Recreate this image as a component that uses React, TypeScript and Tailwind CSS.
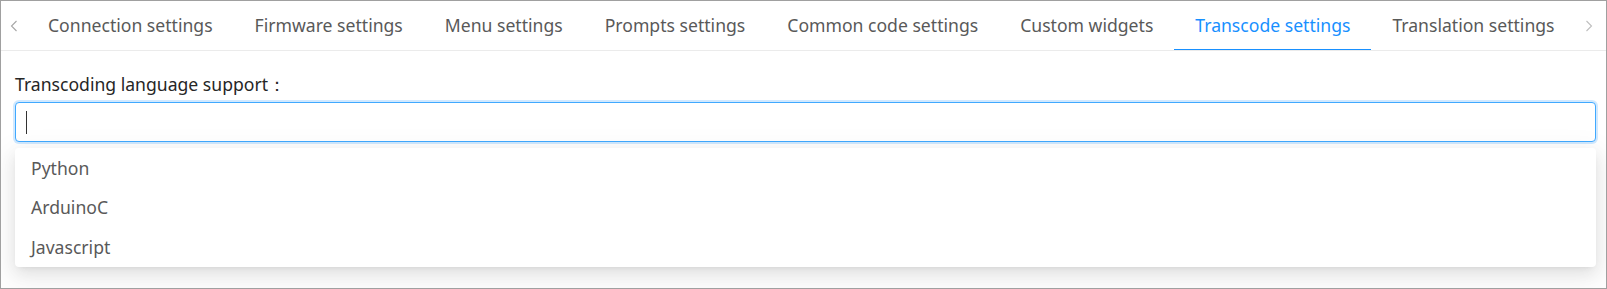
import React from "react";

const tabs = [
  "Connection settings",
  "Firmware settings",
  "Menu settings",
  "Prompts settings",
  "Common code settings",
  "Custom widgets",
  "Transcode settings",
  "Translation settings",
];

const options = ["Python", "ArduinoC", "Javascript"];

export default function App() {
  return (
    <div
      className="w-[1607px] h-[289px] border border-[#a0a0a0] bg-white flex flex-col overflow-hidden"
      style={{ fontFamily: '"Noto Sans", "Open Sans", sans-serif' }}
    >
      <div className="h-[50px] shrink-0 border-b border-[#ebebeb] flex items-stretch">
        <div className="w-[26px] shrink-0 flex items-center justify-center text-[#a6a6a6]">
          <svg width="8" height="12" viewBox="0 0 8 12" fill="none">
            <path d="M6.5 1 L1.5 6 L6.5 11" stroke="currentColor" strokeWidth="1.1" />
          </svg>
        </div>
        <div className="flex-1 flex items-stretch overflow-hidden">
          {tabs.map((t) => {
            const active = t === "Transcode settings";
            return (
              <div
                key={t}
                className={
                  "relative px-[21px] flex items-center whitespace-nowrap text-[17.6px] " +
                  (active ? "text-[#1890ff]" : "text-[#595959]")
                }
              >
                {t}
                {active && (
                  <div className="absolute left-0 right-0 bottom-[-1px] h-[2px] bg-[#1890ff]" />
                )}
              </div>
            );
          })}
        </div>
        <div className="w-[34px] shrink-0 flex items-center justify-center text-[#bfbfbf]">
          <svg width="8" height="12" viewBox="0 0 8 12" fill="none">
            <path d="M1.5 1 L6.5 6 L1.5 11" stroke="currentColor" strokeWidth="1.1" />
          </svg>
        </div>
      </div>
      <div className="pl-[14px] pr-[10px] pt-[21px] flex flex-col">
        <div className="text-[17.6px] leading-[24px] text-[#262626]">
          Transcoding language support：
        </div>
        <div className="mt-[6px] h-[40px] rounded-[4px] border border-[#40a9ff] shadow-[0_0_0_2px_rgba(24,144,255,0.2)] bg-white flex items-center pl-[10px]">
          <div className="w-[1px] h-[23px] bg-[#333]" />
        </div>
        <div className="mt-[6px] rounded-[4px] bg-white shadow-[0_3px_6px_-4px_rgba(0,0,0,0.12),0_6px_16px_0_rgba(0,0,0,0.08),0_9px_28px_8px_rgba(0,0,0,0.05)] flex flex-col">
          {options.map((o) => (
            <div
              key={o}
              className="h-[39.5px] pl-[16px] flex items-center text-[17.6px] text-[#595959]"
            >
              {o}
            </div>
          ))}
        </div>
      </div>
    </div>
  );
}
